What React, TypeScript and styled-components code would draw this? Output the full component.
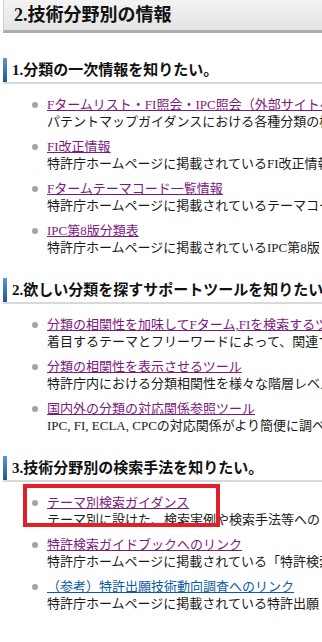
import React from "react";
import styled, { createGlobalStyle } from "styled-components";

const GlobalStyle = createGlobalStyle`
  html, body {
    margin: 0;
    padding: 0;
    background: #ffffff;
  }
  body {
    font-family: "Liberation Serif", "Noto Sans CJK JP", serif;
    color: #1a1a1a;
    overflow: hidden;
  }
`;

const Page = styled.div`
  width: 322px;
  height: 642px;
  overflow: hidden;
  padding-left: 3px;
  box-sizing: border-box;
  white-space: nowrap;
`;

const PageTitle = styled.h2`
  margin: 0;
  height: 30px;
  width: 400px;
  box-sizing: content-box;
  padding-left: 10px;
  border-left: 1px solid #cfcfcf;
  border-bottom: 3px solid #adadad;
  background: linear-gradient(#f3f3f3, #e4e4e4);
  font-size: 18px;
  font-weight: bold;
  line-height: 30px;
  color: #111;
`;

const Section = styled.section<{ $first?: boolean }>`
  margin-top: ${(p) => (p.$first ? "25px" : "22px")};
`;

const SectionTitle = styled.h3`
  margin: 0;
  height: 24px;
  width: 400px;
  position: relative;
  padding-left: 9px;
  border-bottom: 2px solid #d9d9d9;
  font-size: 15px;
  font-weight: bold;
  line-height: 24px;
  color: #111;
  &::before {
    content: "";
    position: absolute;
    left: 0;
    top: 0;
    width: 4px;
    height: 24px;
    background: linear-gradient(#5d97d2, #1c5898);
  }
`;

const List = styled.ul`
  list-style: none;
  margin: 12px 0 0 0;
  padding: 0;
`;

const Item = styled.li`
  position: relative;
  display: flex;
  align-items: flex-start;
  padding-left: 29px;
  margin-bottom: 8px;
  &:last-child {
    margin-bottom: 0;
  }
`;

const Bullet = styled.span`
  flex: none;
  width: 6px;
  height: 6px;
  border-radius: 50%;
  background: #a3a3a3;
  margin-top: 6px;
  margin-right: 9px;
`;

const Texts = styled.div`
  display: flex;
  flex-direction: column;
  font-size: 13px;
  line-height: 17px;
`;

const Link = styled.a<{ $fresh?: boolean }>`
  color: ${(p) => (p.$fresh ? "#0b5aa8" : "#7d1a7d")};
  text-decoration: underline;
  text-underline-offset: 1px;
`;

const Desc = styled.span`
  color: #1a1a1a;
`;

const Highlight = styled.div`
  position: absolute;
  left: 20px;
  top: -10px;
  width: 197px;
  height: 43px;
  border: 4px solid #e3202a;
  box-sizing: border-box;
  pointer-events: none;
`;

type Entry = { link: string; desc: string; fresh?: boolean; marked?: boolean };

const sections: { title: string; items: Entry[] }[] = [
  {
    title: "1.分類の一次情報を知りたい。",
    items: [
      {
        link: "Fタームリスト・FI照会・IPC照会（外部サイトへリンク）",
        desc: "パテントマップガイダンスにおける各種分類の検索",
      },
      { link: "FI改正情報", desc: "特許庁ホームページに掲載されているFI改正情報" },
      {
        link: "Fタームテーマコード一覧情報",
        desc: "特許庁ホームページに掲載されているテーマコード",
      },
      {
        link: "IPC第8版分類表",
        desc: "特許庁ホームページに掲載されているIPC第8版",
      },
    ],
  },
  {
    title: "2.欲しい分類を探すサポートツールを知りたい。",
    items: [
      {
        link: "分類の相関性を加味してFターム,FIを検索するツール",
        desc: "着目するテーマとフリーワードによって、関連する",
      },
      {
        link: "分類の相関性を表示させるツール",
        desc: "特許庁内における分類相関性を様々な階層レベル",
      },
      {
        link: "国内外の分類の対応関係参照ツール",
        desc: "IPC, FI, ECLA, CPCの対応関係がより簡便に調べ",
      },
    ],
  },
  {
    title: "3.技術分野別の検索手法を知りたい。",
    items: [
      {
        link: "テーマ別検索ガイダンス",
        desc: "テーマ別に設けた、検索実例や検索手法等への",
        marked: true,
      },
      {
        link: "特許検索ガイドブックへのリンク",
        desc: "特許庁ホームページに掲載されている「特許検索",
      },
      {
        link: "（参考）特許出願技術動向調査へのリンク",
        desc: "特許庁ホームページに掲載されている特許出願",
        fresh: true,
      },
    ],
  },
];

export default function App() {
  return (
    <>
      <GlobalStyle />
      <Page>
        <PageTitle>2.技術分野別の情報</PageTitle>
        {sections.map((s, i) => (
          <Section key={s.title} $first={i === 0}>
            <SectionTitle>{s.title}</SectionTitle>
            <List>
              {s.items.map((it) => (
                <Item key={it.link}>
                  <Bullet />
                  <Texts>
                    <Link href="#" $fresh={it.fresh}>
                      {it.link}
                    </Link>
                    <Desc>{it.desc}</Desc>
                  </Texts>
                  {it.marked && <Highlight />}
                </Item>
              ))}
            </List>
          </Section>
        ))}
      </Page>
    </>
  );
}
